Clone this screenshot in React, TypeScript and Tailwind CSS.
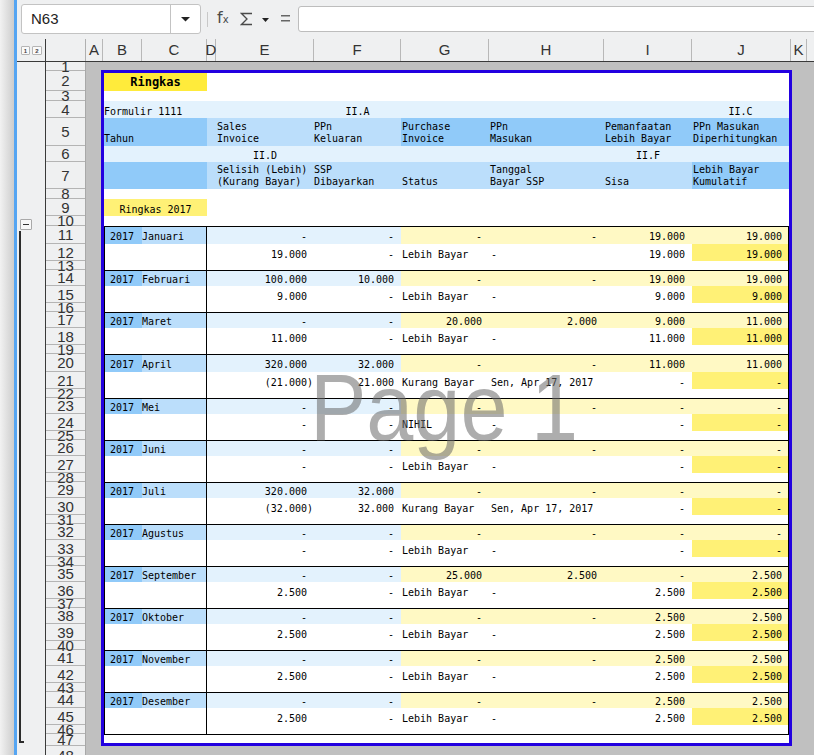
import React from "react";

type Blk = { m: string; a: string[]; b: string[]; tall?: boolean };

const D = "-";
const blocks: Blk[] = [
  { m: "Januari", a: [D, D, D, D, "19.000", "19.000"], b: ["19.000", D, "Lebih Bayar", D, "19.000", "19.000"], tall: true },
  { m: "Februari", a: ["100.000", "10.000", D, D, "19.000", "19.000"], b: ["9.000", D, "Lebih Bayar", D, "9.000", "9.000"] },
  { m: "Maret", a: [D, D, "20.000", "2.000", "9.000", "11.000"], b: ["11.000", D, "Lebih Bayar", D, "11.000", "11.000"] },
  { m: "April", a: ["320.000", "32.000", D, D, "11.000", "11.000"], b: ["(21.000)", "21.000", "Kurang Bayar", "Sen, Apr 17, 2017", D, D], tall: true },
  { m: "Mei", a: [D, D, D, D, D, D], b: [D, D, "NIHIL", D, D, D] },
  { m: "Juni", a: [D, D, D, D, D, D], b: [D, D, "Lebih Bayar", D, D, D] },
  { m: "Juli", a: ["320.000", "32.000", D, D, D, D], b: ["(32.000)", "32.000", "Kurang Bayar", "Sen, Apr 17, 2017", D, D] },
  { m: "Agustus", a: [D, D, D, D, D, D], b: [D, D, "Lebih Bayar", D, D, D] },
  { m: "September", a: [D, D, "25.000", "2.500", D, "2.500"], b: ["2.500", D, "Lebih Bayar", D, "2.500", "2.500"] },
  { m: "Oktober", a: [D, D, D, D, "2.500", "2.500"], b: ["2.500", D, "Lebih Bayar", D, "2.500", "2.500"] },
  { m: "November", a: [D, D, D, D, "2.500", "2.500"], b: ["2.500", D, "Lebih Bayar", D, "2.500", "2.500"] },
  { m: "Desember", a: [D, D, D, D, "2.500", "2.500"], b: ["2.500", D, "Lebih Bayar", D, "2.500", "2.500"] },
];

const HCLS: Record<number, string> = {
  9: "h-[9px]",
  10: "h-[10px]",
  12: "h-[12px]",
  16: "h-[16px]",
  17: "h-[17px]",
  18: "h-[18px]",
  20: "h-[20px]",
  27: "h-[27px]",
  28: "h-[28px]",
};

const rowHeights: number[] = (() => {
  const r = [9, 20, 10, 17, 28, 16, 27, 10, 17, 10, 18, 17, 9];
  for (let i = 0; i < 2; i++) r.push(16, 17, 9);
  r.push(18, 17, 9);
  for (let i = 0; i < 8; i++) r.push(16, 17, 9);
  r.push(12, 20);
  return r;
})();

const cols = [
  { l: "A", w: "w-[17px]" },
  { l: "B", w: "w-[39px]" },
  { l: "C", w: "w-[65px]" },
  { l: "D", w: "w-[9px]" },
  { l: "E", w: "w-[98px]" },
  { l: "F", w: "w-[87px]" },
  { l: "G", w: "w-[88px]" },
  { l: "H", w: "w-[115px]" },
  { l: "I", w: "w-[88px]" },
  { l: "J", w: "w-[99px]" },
  { l: "K", w: "w-[16px]" },
  { l: "L", w: "w-[60px]" },
];

function Num({ v, bg = "", last = false, pb = "pb-0" }: { v: string; bg?: string; last?: boolean; pb?: string }) {
  const neg = v.startsWith("(");
  const pr = last ? (neg ? "pr-0" : "pr-[6px]") : neg ? "pr-[1px]" : "pr-[7px]";
  return <div className={`flex items-end justify-end whitespace-nowrap ${pr} ${pb} ${bg}`}>{v}</div>;
}

function Txt({ v = "", cls = "", pb = "pb-px" }: { v?: string; cls?: string; pb?: string }) {
  return <div className={`flex items-end whitespace-pre ${pb} ${cls}`}>{v}</div>;
}

function Block({ d, last }: { d: Blk; last: boolean }) {
  const pbA = d.tall ? "pb-px" : "pb-0";
  return (
    <div
      className={`grid grid-cols-[37px_65px_9px_98px_87px_88px_115px_88px_96px] border-x border-t border-black leading-[12px] ${
        d.tall ? "grid-rows-[17px_17px_9px]" : "grid-rows-[15px_17px_9px]"
      } ${last ? "border-b" : ""}`}
    >
      {/* month row */}
      <div className={`flex items-end justify-end bg-[#90caf9] pr-[8px] ${pbA}`}>2017</div>
      <div className={`flex items-end whitespace-nowrap border-r border-black bg-[#bbdefb] pl-0 ${pbA}`}>{d.m}</div>
      <div className="bg-[#e3f2fd]" />
      <Num v={d.a[0]} bg="bg-[#e3f2fd]" pb={pbA} />
      <Num v={d.a[1]} bg="bg-[#e3f2fd]" pb={pbA} />
      <Num v={d.a[2]} bg="bg-[#fff9c4]" pb={pbA} />
      <Num v={d.a[3]} bg="bg-[#fff9c4]" pb={pbA} />
      <Num v={d.a[4]} bg="bg-[#fff9c4]" pb={pbA} />
      <Num v={d.a[5]} bg="bg-[#fff9c4]" pb={pbA} last />
      {/* value row */}
      <div />
      <div className="border-r border-black" />
      <div />
      <Num v={d.b[0]} />
      <Num v={d.b[1]} />
      <Txt v={d.b[2]} cls="pl-px" pb="pb-0" />
      <Txt v={d.b[3]} cls="pl-[2px]" pb="pb-0" />
      <Num v={d.b[4]} />
      <Num v={d.b[5]} bg="bg-[#fff176]" last />
      {/* spacer row */}
      <div />
      <div className="border-r border-black" />
      <div />
      <div />
      <div />
      <div />
      <div />
      <div />
      <div />
    </div>
  );
}

export default function App() {
  return (
    <div className="flex h-[755px] w-[814px] overflow-hidden bg-[#eff0f1] text-[#222] [font-family:'Liberation_Sans',Arial,sans-serif]">
      {/* window edge */}
      <div className="w-[14px] shrink-0 bg-gradient-to-r from-[#f2f2f2] to-[#cdcdcd]" />
      <div className="w-[3px] shrink-0 bg-[#55a5f2]" />

      <div className="flex min-w-0 flex-1 flex-col">
        {/* toolbar */}
        <div className="flex h-[39px] shrink-0 items-start">
          <div className="ml-[4px] mt-[4px] flex h-[30px] w-[180px] shrink-0 rounded-[3px] border border-[#c3c3c3] bg-white">
            <div className="flex flex-1 items-center pl-[9px] text-[15px] text-[#222]">N63</div>
            <div className="flex w-[30px] items-center justify-center border-l border-[#c3c3c3]">
              <svg width="9" height="5" viewBox="0 0 9 5">
                <path d="M0 0H9L4.5 4.5Z" fill="#222" />
              </svg>
            </div>
          </div>
          <div className="ml-[6px] mt-[12px] h-[15px] w-px shrink-0 bg-[#c8c8c8]" />
          <div className="ml-[9px] mt-[10px] flex w-[13px] shrink-0 items-baseline text-[#4a4a4a] [font-family:'DejaVu_Sans',sans-serif]">
            <span className="text-[16px] leading-[16px]">f</span>
            <span className="text-[10px] leading-[10px]">x</span>
          </div>
          <svg className="ml-[10px] mt-[12px] shrink-0" width="13" height="14" viewBox="0 0 13 14">
            <path d="M12 1.5H1.5L7 7L1.5 12.5H12" fill="none" stroke="#4a4a4a" strokeWidth="1.3" />
          </svg>
          <svg className="ml-[9px] mt-[18px] shrink-0" width="7" height="4" viewBox="0 0 7 4">
            <path d="M0 0H7L3.5 4Z" fill="#222" />
          </svg>
          <svg className="ml-[12px] mt-[15px] shrink-0" width="9" height="7" viewBox="0 0 9 7">
            <rect x="0" y="0" width="9" height="1.5" fill="#666" />
            <rect x="0" y="5" width="9" height="1.5" fill="#666" />
          </svg>
          <div className="-mr-[4px] ml-[8px] mt-[6px] h-[26px] flex-1 rounded-l-[3px] border border-[#bdbdbd] bg-white" />
        </div>

        {/* column header */}
        <div className="flex h-[23px] shrink-0 border-b border-[#3a3a3a]">
          <div className="flex w-[28px] shrink-0 items-start gap-[2px] pl-[4px] pt-[7px]">
            <div className="flex h-[9px] w-[9px] items-center justify-center rounded-[1px] border border-[#b5b5b5] bg-[#fafafa] text-[6px] font-bold leading-none text-[#444]">
              1
            </div>
            <div className="flex h-[9px] w-[10px] items-center justify-center rounded-[1px] border border-[#b5b5b5] bg-[#fafafa] text-[6px] font-bold leading-none text-[#444]">
              2
            </div>
          </div>
          <div className="w-[41px] shrink-0 border-l border-r border-l-[#3a3a3a] border-r-[#b0b0b0]" />
          {cols.map((c) => (
            <div
              key={c.l}
              className={`${c.w} flex shrink-0 items-center justify-center whitespace-nowrap border-r border-[#b8b8b8] text-[15px] text-[#333]`}
            >
              {c.l}
            </div>
          ))}
        </div>

        {/* body */}
        <div className="flex min-h-0 flex-1 overflow-hidden">
          {/* outline column */}
          <div className="flex w-[28px] shrink-0 flex-col items-start pt-[157px]">
            <div className="ml-[3px] flex h-[11px] w-[12px] items-center justify-center rounded-[1px] border border-[#a9a9a9] bg-[#f8f8f8]">
              <div className="h-[1.5px] w-[6px] bg-[#333]" />
            </div>
            <div className="ml-[2px] mt-[1px] h-[512px] w-[5px] border-b-2 border-l-2 border-[#2b2b2b]" />
          </div>

          {/* row headers */}
          <div className="flex w-[41px] shrink-0 flex-col border-l border-r border-l-[#3a3a3a] border-r-[#a8a8a8]">
            {rowHeights.map((h, i) => (
              <div
                key={i}
                className={`${HCLS[h]} flex shrink-0 items-center justify-center whitespace-nowrap border-b border-[#b4b4b4] text-[15px] leading-none text-[#333]`}
              >
                {i + 1}
              </div>
            ))}
          </div>

          {/* cells area */}
          <div className="min-w-0 flex-1 overflow-hidden bg-[#c0c0c0]">
            <div className="relative ml-[15px] mt-[8px] h-[676px] w-[691px] border-[3px] border-[#2200e0] bg-white text-[10px] text-black [font-family:'DejaVu_Sans_Mono',monospace]">
              <div className="flex flex-col">
                {/* row 2 */}
                <div className="flex h-[18px]">
                  <div className="flex w-[103px] items-end justify-center bg-[#ffeb3b] pb-[2px] text-[12px] font-bold leading-[14px]">
                    Ringkas
                  </div>
                </div>
                {/* row 3 */}
                <div className="h-[10px]" />
                {/* row 4 */}
                <div className="grid h-[17px] grid-cols-[38px_65px_9px_98px_87px_88px_115px_88px_97px] bg-[#e3f2fd] leading-[12px]">
                  <div className="flex items-end whitespace-nowrap">Formulir 1111</div>
                  <div />
                  <div />
                  <div />
                  <div className="flex items-end justify-center">II.A</div>
                  <div />
                  <div />
                  <div />
                  <div className="flex items-end justify-center">II.C</div>
                </div>
                {/* row 5 */}
                <div className="grid h-[28px] grid-cols-[103px_9px_98px_87px_88px_115px_88px_97px] leading-[12px]">
                  <Txt v="Tahun" cls="bg-[#90caf9]" />
                  <Txt cls="bg-[#bbdefb]" />
                  <Txt v={"Sales\nInvoice"} cls="bg-[#bbdefb] pl-px" />
                  <Txt v={"PPn\nKeluaran"} cls="bg-[#bbdefb]" />
                  <Txt v={"Purchase\nInvoice"} cls="bg-[#90caf9] pl-px" />
                  <Txt v={"PPn\nMasukan"} cls="bg-[#90caf9] pl-px" />
                  <Txt v={"Pemanfaatan\nLebih Bayar"} cls="bg-[#90caf9] pl-px" />
                  <Txt v={"PPn Masukan\nDiperhitungkan"} cls="bg-[#90caf9] pl-px" />
                </div>
                {/* row 6 */}
                <div className="grid h-[16px] grid-cols-[38px_65px_9px_98px_87px_88px_115px_88px_97px] bg-[#e3f2fd] leading-[12px]">
                  <div />
                  <div />
                  <div />
                  <div className="flex items-end justify-center">II.D</div>
                  <div />
                  <div />
                  <div />
                  <div className="flex items-end justify-center">II.F</div>
                  <div />
                </div>
                {/* row 7 */}
                <div className="grid h-[27px] grid-cols-[103px_9px_98px_87px_88px_115px_88px_97px] leading-[12px]">
                  <Txt cls="bg-[#90caf9]" />
                  <Txt cls="bg-[#bbdefb]" />
                  <Txt v={"Selisih (Lebih)\n(Kurang Bayar)"} cls="bg-[#bbdefb] pl-px" />
                  <Txt v={"SSP\nDibayarkan"} cls="bg-[#bbdefb]" />
                  <Txt v="Status" cls="bg-[#bbdefb] pl-px" />
                  <Txt v={"Tanggal\nBayar SSP"} cls="bg-[#bbdefb] pl-px" />
                  <Txt v="Sisa" cls="bg-[#bbdefb] pl-px" />
                  <Txt v={"Lebih Bayar\nKumulatif"} cls="bg-[#90caf9] pl-px" />
                </div>
                {/* row 8 */}
                <div className="h-[10px]" />
                {/* row 9 */}
                <div className="flex h-[17px] leading-[12px]">
                  <div className="flex w-[103px] items-end justify-center bg-[#fff176]">Ringkas 2017</div>
                </div>
                {/* row 10 */}
                <div className="h-[10px]" />
                {blocks.map((d, i) => (
                  <Block key={d.m} d={d} last={i === blocks.length - 1} />
                ))}
              </div>

              <div className="pointer-events-none absolute inset-0 flex items-center justify-center">
                <span className="-translate-x-[3px] scale-x-[0.9] text-[94px] leading-none text-[rgba(105,105,105,0.55)] [font-family:'Liberation_Sans',Arial,sans-serif]">
                  Page 1
                </span>
              </div>
            </div>
          </div>
        </div>
      </div>
    </div>
  );
}
